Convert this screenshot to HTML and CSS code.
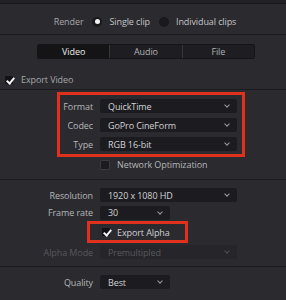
FILE: index.html
```html
<!DOCTYPE html>
<html lang="en">
<head>
    <meta charset="UTF-8">
    <meta name="viewport" content="width=device-width, initial-scale=1.0">
    <title>Render Settings</title>
    <link rel="stylesheet" href="styles.css">
</head>
<body>
    <div class="panel">
        <div class="top-band"></div>

        <div class="render-row">
            <span class="render-label">Render</span>
            <span class="radio checked"></span>
            <span class="radio-text">Single clip</span>
            <span class="radio"></span>
            <span class="radio-text">Individual clips</span>
        </div>

        <div class="tabs-wrap">
            <div class="tabs">
                <div class="tab active">Video</div>
                <div class="tab">Audio</div>
                <div class="tab">File</div>
            </div>
        </div>

        <div class="export-video">
            <span class="check on"></span>
            <span class="check-text">Export Video</span>
        </div>

        <div class="section first">
            <div class="highlight">
                <div class="row">
                    <span class="label">Format</span>
                    <div class="select">QuickTime<span class="chevron"></span></div>
                </div>
                <div class="row">
                    <span class="label">Codec</span>
                    <div class="select">GoPro CineForm<span class="chevron"></span></div>
                </div>
                <div class="row">
                    <span class="label">Type</span>
                    <div class="select">RGB 16-bit<span class="chevron"></span></div>
                </div>
            </div>
            <div class="option-row">
                <span class="check"></span>
                <span class="check-text">Network Optimization</span>
            </div>
        </div>

        <div class="section second">
            <div class="row">
                <span class="label">Resolution</span>
                <div class="select">1920 x 1080 HD<span class="chevron"></span></div>
            </div>
            <div class="row short">
                <span class="label">Frame rate</span>
                <div class="select small">30<span class="chevron"></span></div>
            </div>
            <div class="alpha-box">
                <span class="check on"></span>
                <span class="check-text">Export Alpha</span>
            </div>
            <div class="row disabled">
                <span class="label">Alpha Mode</span>
                <div class="select">Premultipled<span class="chevron"></span></div>
            </div>
        </div>

        <div class="section third">
            <div class="row">
                <span class="label">Quality</span>
                <div class="select small">Best<span class="chevron"></span></div>
            </div>
        </div>
    </div>
</body>
</html>
```

FILE: styles.css
```css
* {
    margin: 0;
    padding: 0;
    box-sizing: border-box;
}

body {
    background: #2a2a2f;
    font-family: 'Open Sans', sans-serif;
    font-size: 9px;
    letter-spacing: -0.1px;
    color: #b6b6b8;
    overflow: hidden;
}

.panel {
    width: 286px;
    height: 300px;
}

.top-band {
    height: 4px;
    background: #222226;
    border-bottom: 1px solid #19191c;
}

.render-row {
    height: 31px;
    padding-top: 5px;
    display: flex;
    align-items: center;
    justify-content: center;
    gap: 7px;
    border-bottom: 1px solid #1b1b1e;
    padding-left: 4px;
}

.render-label {
    color: #a8a8aa;
}

.radio {
    width: 10px;
    height: 10px;
    border-radius: 50%;
    background: #1a1a1d;
    display: flex;
    align-items: center;
    justify-content: center;
    margin-left: 2px;
}

.radio.checked::after {
    content: '';
    width: 5px;
    height: 5px;
    border-radius: 50%;
    background: #f2f2f2;
}

.radio-text {
    color: #c4c4c6;
}

.tabs-wrap {
    padding: 9px 0 11px 37px;
}

.tabs {
    display: flex;
    width: 218px;
    height: 15px;
    background: #1e1e22;
    border: 1px solid #151518;
    border-radius: 2px;
    overflow: hidden;
}

.tab {
    flex: 1;
    display: flex;
    align-items: center;
    justify-content: center;
    color: #b0b0b2;
    border-left: 1px solid #35353a;
}

.tab:first-child {
    border-left: none;
}

.tab.active {
    background: #141417;
    color: #ececec;
}

.export-video {
    height: 20px;
    display: flex;
    align-items: center;
    gap: 7px;
    padding-left: 4px;
    border-bottom: 1px solid #1b1b1e;
}

.check {
    width: 10px;
    height: 10px;
    border-radius: 1px;
    background: #1c1c20;
    border: 1px solid #3a3a3f;
    position: relative;
    flex-shrink: 0;
}

.check.on {
    background: #131316;
    border-color: #2c2c30;
}

.check.on::after {
    content: '';
    position: absolute;
    left: 3px;
    top: 0;
    width: 3px;
    height: 6px;
    border-right: 2px solid #f4f4f4;
    border-bottom: 2px solid #f4f4f4;
    transform: rotate(40deg);
}

.check-text {
    color: #a6a6a8;
}

.section {
    border-bottom: 1px solid #1b1b1e;
}

.section.first {
    padding: 2px 0 7px 57px;
}

.highlight {
    width: 188px;
    border: 3px solid #e0311d;
    padding: 2px 0 1px;
    display: flex;
    flex-direction: column;
    gap: 1px;
}

.row {
    height: 18px;
    display: flex;
    align-items: center;
}

.label {
    width: 100px;
    padding-right: 7px;
    text-align: right;
    color: #b6b6b8;
}

.highlight .label {
    width: 40px;
}

.select {
    width: 137px;
    height: 14px;
    background: #1c1c20;
    border-radius: 2px;
    display: flex;
    align-items: center;
    justify-content: space-between;
    padding: 0 8px 0 8px;
    color: #d2d2d4;
}

.select.small {
    width: 70px;
}

.chevron {
    width: 4px;
    height: 4px;
    border-right: 1px solid #9a9a9c;
    border-bottom: 1px solid #9a9a9c;
    transform: rotate(45deg);
    margin-bottom: 2px;
}

.option-row {
    height: 15px;
    display: flex;
    align-items: center;
    gap: 7px;
    padding-left: 43px;
}

.option-row .check-text {
    color: #b6b6b8;
}

.section.second {
    padding: 6px 0 5px;
}

.row.short {
    height: 17px;
}

.alpha-box {
    margin-left: 87px;
    width: 101px;
    height: 22px;
    border: 3px solid #e0311d;
    display: flex;
    align-items: center;
    gap: 6px;
    padding-left: 11px;
}

.alpha-box .check-text {
    color: #d0d0d2;
}

.row.disabled .label {
    color: #58585c;
}

.row.disabled .select {
    background: #26262a;
    color: #58585c;
}

.row.disabled .chevron {
    border-color: #505054;
}

.section.third {
    border-bottom: none;
    padding-top: 6px;
}
```
